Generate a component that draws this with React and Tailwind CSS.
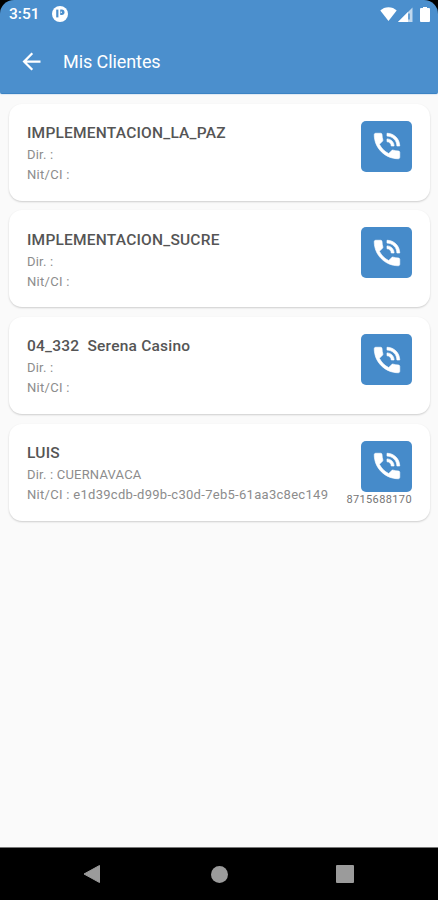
import { MdArrowBack } from 'react-icons/md'

const CLIENTS = [
  { id: 1, name: 'IMPLEMENTACION_LA_PAZ', address: '', nit: '', phone: '' },
  { id: 2, name: 'IMPLEMENTACION_SUCRE', address: '', nit: '', phone: '' },
  { id: 3, name: '04_332  Serena Casino', address: '', nit: '', phone: '' },
  {
    id: 4,
    name: 'LUIS',
    address: 'CUERNAVACA',
    nit: 'e1d39cdb-d99b-c30d-7eb5-61aa3c8ec149',
    phone: '8715688170',
  },
]

function StatusBar() {
  return (
    <div className="flex h-7 items-center pl-[9px] pr-[8px] text-white">
      <span className="w-[43px] text-[15.5px] font-medium leading-7">3:51</span>
      <svg viewBox="0 0 16 16" className="h-4 w-4">
        <circle cx="8" cy="8" r="8" fill="#fff" />
        <path d="M4.2 3.6h2.2v7.8H4.2z" fill="#4b8fcd" />
        <path d="M8.2 3.6h1.6a2.7 2.7 0 0 1 0 5.4H8.2z" fill="#4b8fcd" />
        <circle cx="9.3" cy="6.2" r="0.7" fill="#fff" />
      </svg>
      <div className="ml-auto flex items-center">
        <svg viewBox="0 0 17 14" className="h-[14px] w-[17px]">
          <path d="M8.5 14 .3 3.6C2.5 1.5 5.3.3 8.5.3s6 1.2 8.2 3.3z" fill="#fff" />
        </svg>
        <svg viewBox="0 0 15 15" className="ml-[1px] h-[15px] w-[15px]">
          <path d="M0 15 14.5.5V15z" fill="#fff" fillOpacity="0.65" />
          <path d="M0 15 10 5v10z" fill="#fff" />
          <path d="M11 6.5v6" stroke="#4b8fcd" strokeWidth="1.5" />
        </svg>
        <svg viewBox="0 0 10 15" className="ml-[7px] h-[15px] w-[10px]">
          <path d="M3 0h4v1h2q1 0 1 1v12q0 1-1 1H1q-1 0-1-1V2q0-1 1-1h2z" fill="#fff" />
        </svg>
      </div>
    </div>
  )
}

function Header() {
  return (
    <header className="h-[94px] shrink-0 bg-[linear-gradient(#000_50%,#fafafa_50%)]">
      <div className="h-full rounded-t-[14px] rounded-b-[2px] border-b border-[#3b83c4] bg-[#4b8fcd] shadow-[0_1px_1px_rgba(75,143,205,0.15)]">
        <StatusBar />
        <div className="flex h-[66px] items-center pl-[18px] text-white">
          <MdArrowBack className="h-[27px] w-[27px]" />
          <h1 className="ml-[18px] pt-[1px] text-[18px] font-normal leading-6 tracking-[-0.08px]">Mis Clientes</h1>
        </div>
      </div>
    </header>
  )
}

function CallIcon() {
  return (
    <svg viewBox="0 0 24 24" fill="currentColor" stroke="currentColor" strokeWidth="0.45" className="h-[34px] w-[34px]">
      <path d="M20 15.5c-1.25 0-2.45-.2-3.57-.57-.35-.11-.74-.03-1.02.24l-2.2 2.2c-2.83-1.44-5.15-3.75-6.59-6.59l2.2-2.21c.28-.26.36-.65.25-1C8.7 6.45 8.5 5.25 8.5 4c0-.55-.45-1-1-1H4c-.55 0-1 .45-1 1 0 9.39 7.61 17 17 17 .55 0 1-.45 1-1v-3.5c0-.55-.45-1-1-1z" />
      <path d="M19 12h2c0-4.97-4.03-9-9-9v2c3.87 0 7 3.13 7 7zm-4 0h2c0-2.76-2.24-5-5-5v2c1.66 0 3 1.34 3 3z" />
    </svg>
  )
}

function ClientCard({ client }) {
  return (
    <li className="flex h-[97px] justify-between rounded-[13px] bg-white pl-[18px] pr-[18px] shadow-[0_1px_2px_rgba(0,0,0,0.18)]">
      <div className="pt-[19.3px]">
        <p className="whitespace-pre text-[15.5px] font-medium leading-5 tracking-[0.22px] text-[#555]">{client.name}</p>
        <p className="mt-[3px] whitespace-pre text-[13px] leading-[18px] tracking-[0.2px] text-[#8c8c8c]">Dir. : {client.address}</p>
        <p className="mt-[2px] whitespace-pre text-[13px] leading-[18px] tracking-[0.29px] text-[#8c8c8c]">Nit/CI : {client.nit}</p>
      </div>
      <div className="flex flex-col items-end pt-[17px]">
        <button type="button" aria-label="Llamar" className="flex h-[51px] w-[51px] shrink-0 items-center justify-center rounded-[5px] bg-[#468bca] text-white">
          <CallIcon />
        </button>
        <span className="mt-[2px] text-[11px] leading-3 tracking-[0.38px] text-[#757575]">{client.phone}</span>
      </div>
    </li>
  )
}

function NavigationBar() {
  return (
    <nav className="flex h-[53px] shrink-0 items-center border-t border-[#777] bg-black pl-[83px] pr-[84px]">
      <svg viewBox="0 0 18 18" className="h-[18px] w-[18px]">
        <path d="M16.5.5v17L1 9z" fill="#9b9b9b" stroke="#9b9b9b" strokeLinejoin="round" />
      </svg>
      <span className="ml-[110px] h-[17px] w-[17px] rounded-full bg-[#9b9b9b]" />
      <span className="ml-auto h-[18px] w-[18px] rounded-[1px] bg-[#9b9b9b]" />
    </nav>
  )
}

export default function App() {
  return (
    <div className="flex h-[900px] w-[438px] flex-col overflow-hidden bg-[#fafafa] font-['Roboto',sans-serif]">
      <Header />
      <main className="flex-1 pl-[9px] pr-[8px] pt-[9.5px]">
        <ul className="flex flex-col gap-[9.75px]">
          {CLIENTS.map((client) => (
            <ClientCard key={client.id} client={client} />
          ))}
        </ul>
      </main>
      <NavigationBar />
    </div>
  )
}
